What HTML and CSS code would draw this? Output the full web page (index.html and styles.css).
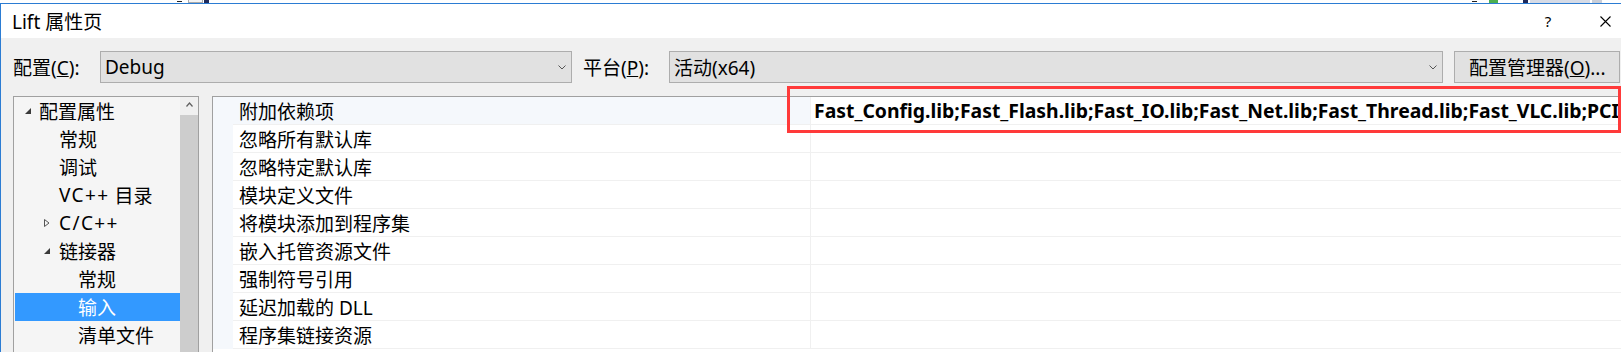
FILE: index.html
```html
<!DOCTYPE html>
<html lang="zh-CN">
<head>
<meta charset="utf-8">
<title>Lift 属性页</title>
<link rel="stylesheet" href="styles.css">
</head>
<body>
<div class="screen">
  <div class="topstrip">
    <span class="junk j1"></span>
    <span class="junk j2"></span>
    <span class="junk j3"></span>
    <span class="junk j4"></span>
    <span class="junk j5"></span>
    <span class="junk j6"></span>
    <span class="junk j7"></span>
    <span class="junk j8"></span>
  </div>
  <div class="window">
    <div class="titlebar">
      <span class="title">Lift 属性页</span>
      <span class="help">?</span>
      <span class="close">
        <svg width="11" height="11" viewBox="0 0 11 11"><path d="M0.5 0.5 L10.5 10.5 M10.5 0.5 L0.5 10.5" stroke="#000" stroke-width="1.1" fill="none"/></svg>
      </span>
    </div>
    <div class="toolbar">
      <span class="lbl">配置(<u>C</u>):</span>
      <div class="combo combo-config">
        <span class="combo-text">Debug</span>
        <svg class="chev" width="8" height="5" viewBox="0 0 8 5"><path d="M0.5 0.5 L4 4 L7.5 0.5" stroke="#555" stroke-width="1" fill="none"/></svg>
      </div>
      <span class="lbl lbl-platform">平台(<u>P</u>):</span>
      <div class="combo combo-platform">
        <span class="combo-text">活动(x64)</span>
        <svg class="chev" width="8" height="5" viewBox="0 0 8 5"><path d="M0.5 0.5 L4 4 L7.5 0.5" stroke="#555" stroke-width="1" fill="none"/></svg>
      </div>
      <button class="btn" type="button">配置管理器(<u>O</u>)...</button>
    </div>
    <div class="main">
      <div class="tree">
        <ul class="tree-list">
          <li class="lvl0"><span class="exp"><svg width="6" height="6" viewBox="0 0 6 6"><path d="M6 0 L6 6 L0 6 Z" fill="#3a3a3a"/></svg></span>配置属性</li>
          <li class="lvl1"><span class="exp"></span>常规</li>
          <li class="lvl1"><span class="exp"></span>调试</li>
          <li class="lvl1"><span class="exp"></span><span class="lat">VC++</span>&nbsp;目录</li>
          <li class="lvl1"><span class="exp"><svg width="6" height="8" viewBox="0 0 6 8"><path d="M0.5 0.5 L5 4 L0.5 7.5 Z" fill="none" stroke="#555" stroke-width="1"/></svg></span><span class="lat">C/C++</span></li>
          <li class="lvl1"><span class="exp"><svg width="6" height="6" viewBox="0 0 6 6"><path d="M6 0 L6 6 L0 6 Z" fill="#3a3a3a"/></svg></span>链接器</li>
          <li class="lvl2"><span class="exp"></span>常规</li>
          <li class="lvl2 selected"><span class="exp"></span>输入</li>
          <li class="lvl2"><span class="exp"></span>清单文件</li>
        </ul>
        <div class="vscroll">
          <div class="vs-up"><svg width="7" height="5" viewBox="0 0 7 5"><path d="M0.5 4.5 L3.5 1 L6.5 4.5" stroke="#606060" stroke-width="1.2" fill="none"/></svg></div>
          <div class="vs-thumb"></div>
        </div>
      </div>
      <div class="grid">
        <div class="grow grow-active">
          <div class="gutter"></div>
          <div class="gname">附加依赖项</div>
          <div class="gval">Fast_Config.lib;Fast_Flash.lib;Fast_IO.lib;Fast_Net.lib;Fast_Thread.lib;Fast_VLC.lib;PCI1750.lib;%(AdditionalDependencies)</div>
        </div>
        <div class="grow"><div class="gutter"></div><div class="gname">忽略所有默认库</div><div class="gval"></div></div>
        <div class="grow"><div class="gutter"></div><div class="gname">忽略特定默认库</div><div class="gval"></div></div>
        <div class="grow"><div class="gutter"></div><div class="gname">模块定义文件</div><div class="gval"></div></div>
        <div class="grow"><div class="gutter"></div><div class="gname">将模块添加到程序集</div><div class="gval"></div></div>
        <div class="grow"><div class="gutter"></div><div class="gname">嵌入托管资源文件</div><div class="gval"></div></div>
        <div class="grow"><div class="gutter"></div><div class="gname">强制符号引用</div><div class="gval"></div></div>
        <div class="grow"><div class="gutter"></div><div class="gname">延迟加载的 DLL</div><div class="gval"></div></div>
        <div class="grow"><div class="gutter"></div><div class="gname">程序集链接资源</div><div class="gval"></div></div>
      </div>
    </div>
  </div>
  <div class="callout"></div>
</div>
</body>
</html>
```

FILE: styles.css
```css
* { box-sizing: border-box; }
html, body { margin: 0; padding: 0; }
body {
  width: 1621px;
  height: 352px;
  overflow: hidden;
  background: #fff;
  font-family: "Noto Sans", "Noto Sans CJK SC", sans-serif;
  font-size: 19px;
  color: #000;
}
.screen { position: relative; width: 1621px; height: 352px; overflow: hidden; }

/* strip of the screen behind the dialog */
.topstrip { position: relative; height: 3px; background: #fff; }
.junk { position: absolute; top: 0; height: 3px; }
.j1 { left: 177px; width: 5px; height: 1px; top: 1px; background: #222; }
.j2 { left: 188px; width: 15px; border: 1px solid #aaa; border-top: none; background: #f4f4f4; }
.j3 { left: 204px; width: 5px; background: #1f2a5a; }
.j4 { left: 1472px; width: 5px; height: 1px; top: 1px; background: #222; }
.j5 { left: 1489px; width: 9px; background: #4caf50; }
.j6 { left: 1523px; width: 5px; background: #1f2a5a; }
.j7 { left: 1530px; width: 60px; background: #d6dbe6; }
.j8 { left: 1592px; width: 10px; background: #c9ced8; }

.window {
  height: 349px;
  border-top: 1px solid #2b7cd3;
  border-left: 1px solid #2b7cd3;
  background: #f0f0f0;
  display: flex;
  flex-direction: column;
}

/* title bar */
.titlebar {
  flex: none;
  height: 34px;
  background: #fff;
  display: flex;
  align-items: center;
  padding-left: 11px;
}
.title { flex: 1; font-size: 19px; }
.help { width: 46px; margin-right: 18px; text-align: center; font-size: 15px; }
.close { width: 32px; display: flex; justify-content: center; align-items: center; }

/* configuration row */
.toolbar {
  flex: none;
  height: 58px;
  display: flex;
  align-items: center;
  padding-left: 12px;
}
.lbl { width: 87px; white-space: nowrap; }
.lbl-platform { width: 86px; margin-left: 11px; }
.combo {
  height: 32px;
  border: 1px solid #adadad;
  background: #e1e1e1;
  display: flex;
  align-items: center;
  padding-left: 4px;
}
.combo-config { width: 472px; }
.combo-platform { width: 774px; }
.combo-text { flex: 1; }
.chev { margin-right: 5px; }
.btn {
  margin-left: 11px;
  width: 166px;
  height: 32px;
  border: 1px solid #adadad;
  background: #e1e1e1;
  font: inherit;
  color: #000;
  text-align: left;
  padding: 0 0 0 14px;
  white-space: nowrap;
}

/* main area */
.main { flex: 1; display: flex; padding-left: 12px; min-height: 0; }

.tree {
  flex: none;
  width: 186px;
  border: 1px solid #a0a0a0;
  border-bottom: none;
  background: #f5f5f5;
  display: flex;
}
.tree-list {
  flex: 1;
  list-style: none;
  margin: 0;
  padding: 0 0 0 1px;
}
.tree-list li {
  height: 28px;
  display: flex;
  align-items: center;
  white-space: nowrap;
}
.lat { letter-spacing: 1.4px; }
.exp { flex: none; width: 15px; display: flex; align-items: center; padding-left: 1px; }
.lvl0 { padding-left: 9px; }
.lvl1 { padding-left: 29px; }
.lvl1 .exp { padding-left: 0; }
.lvl2 { padding-left: 48px; }
.tree-list li.selected { background: #3399ff; color: #fff; }

.vscroll { flex: none; width: 18px; display: flex; flex-direction: column; background: #f0f0f0; }
.vs-up { height: 18px; display: flex; justify-content: center; align-items: center; padding-bottom: 3px; }
.vs-thumb { flex: 1; background: #cdcdcd; }

.grid {
  flex: 1;
  margin-left: 13px;
  border-left: 1px solid #a0a0a0;
  border-top: 1px solid #a0a0a0;
  background: #fff;
  min-width: 0;
  overflow: hidden;
}
.grow { display: flex; height: 28px; }
.gutter { flex: none; width: 20px; background: #f5f8fc; }
.gname {
  flex: none;
  width: 577px;
  padding-left: 6px;
  display: flex;
  align-items: center;
  border-bottom: 1px solid #f0f0f0;
  white-space: nowrap;
}
.grow-active .gname { background: #f5f8fc; }
.gval {
  flex: 1;
  min-width: 0;
  border-left: 1px solid #f0f0f0;
  border-bottom: 1px solid #f0f0f0;
  padding-left: 3px;
  display: flex;
  align-items: center;
  white-space: nowrap;
  overflow: hidden;
  font-weight: bold;
  font-size: 19.4px;
}

/* red annotation box drawn over the screenshot */
.callout {
  position: absolute;
  left: 787px;
  top: 86px;
  width: 834px;
  height: 47px;
  border: 3px solid #ff3a3a;
}
```
